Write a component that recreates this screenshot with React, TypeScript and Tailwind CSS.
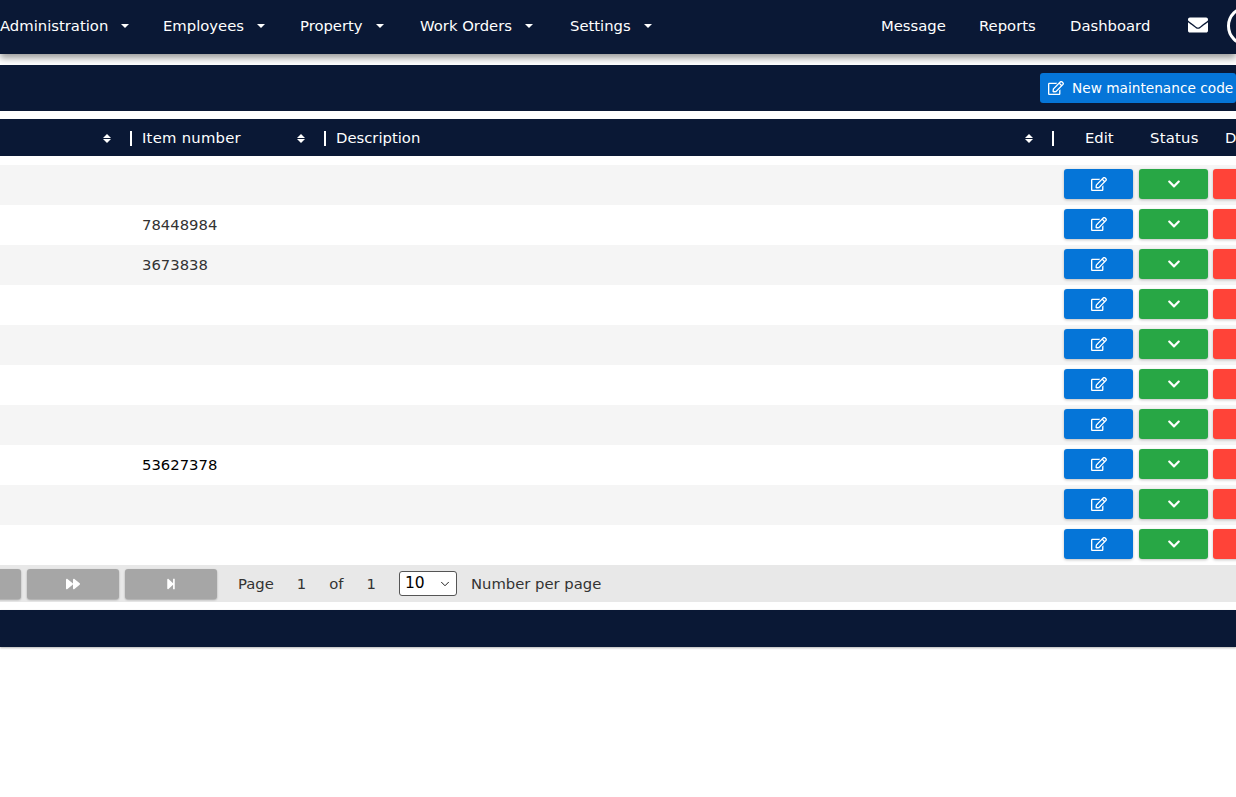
import React from 'react';
import { ChevronDown } from 'lucide-react';
import { FaChevronDown, FaEnvelope, FaForward, FaRegEdit, FaStepForward } from 'react-icons/fa';

const navy = 'bg-[#0a1835]';

const leftNav = [
  { label: 'Administration', w: 'w-[163px]' },
  { label: 'Employees', w: 'w-[137px]' },
  { label: 'Property', w: 'w-[120px]' },
  { label: 'Work Orders', w: 'w-[150px]' },
  { label: 'Settings', w: 'w-[311px]' },
];

const rows = ['', '78448984', '3673838', '', '', '', '', '53627378', '', ''];

const Caret = () => <span className="ml-[13px] h-0 w-0 shrink-0 border-x-[4.5px] border-t-[4px] border-x-transparent border-t-white" />;

const Sort = () => (
  <span className="flex w-[9px] shrink-0 flex-col gap-[1px]">
    <span className="h-0 w-0 border-x-[4.5px] border-b-[4px] border-x-transparent border-b-white" />
    <span className="h-0 w-0 border-x-[4.5px] border-t-[4px] border-x-transparent border-t-white" />
  </span>
);

const Divider = () => <span className="h-[15px] w-[2px] shrink-0 bg-white" />;

const App = () => {
  return (
    <div className="h-[797px] w-[1236px] overflow-hidden bg-white font-['DejaVu_Sans',sans-serif] text-[14.8px] text-[#333333]">
      <nav className={`${navy} relative z-10 flex h-[54px] items-center pb-[2px] text-white shadow-[0_4px_7px_rgba(0,0,0,0.4)]`}>
        <div className="flex w-[881px] shrink-0">
          {leftNav.map((n) => (
            <span key={n.label} className={`flex shrink-0 items-center whitespace-nowrap ${n.w}`}>
              {n.label}
              <Caret />
            </span>
          ))}
        </div>
        <span className="w-[98px] shrink-0">Message</span>
        <span className="w-[91px] shrink-0">Reports</span>
        <span className="w-[118px] shrink-0">Dashboard</span>
        <FaEnvelope size={20} className="-mt-[2px] shrink-0 text-white" />
        <span className="ml-[19px] h-[40px] w-[40px] shrink-0 rounded-full border-[3px] border-white" />
      </nav>

      <div className={`${navy} mt-[11px] flex h-[46px] items-center justify-end`}>
        <button className="flex h-[30px] w-[196px] shrink-0 items-center gap-[8px] rounded-[3px] bg-[#0575d8] pl-[8px] text-[13.7px] whitespace-nowrap text-white">
          <FaRegEdit size={16} className="shrink-0" />
          New maintenance code
        </button>
      </div>

      <div className={`${navy} mt-[8px] flex h-[37px] items-center pt-[2px] text-white`}>
        <div className="flex w-[130px] shrink-0 items-center justify-end pr-[18px]">
          <Sort />
        </div>
        <Divider />
        <span className="ml-[10px] w-[155px] shrink-0 tracking-[0.25px]">Item number</span>
        <Sort />
        <span className="ml-[18px] flex shrink-0"><Divider /></span>
        <span className="ml-[10px] w-[689px] shrink-0">Description</span>
        <Sort />
        <span className="ml-[18px] flex shrink-0"><Divider /></span>
        <span className="ml-[31px] w-[65px] shrink-0">Edit</span>
        <span className="w-[75px] shrink-0 tracking-[0.25px]">Status</span>
        <span className="shrink-0">Delete</span>
      </div>

      <div className="mt-[9px]">
        {rows.map((item, i) => (
          <div key={i} className={`flex h-[40px] items-center ${i % 2 === 0 ? 'bg-[#f5f5f5]' : 'bg-white'}`}>
            <span className={`ml-[142px] w-[922px] shrink-0 ${item === '53627378' ? 'text-black' : ''}`}>{item}</span>
            <div className="mb-[2px] flex shrink-0 gap-[6px]">
              <button className="flex h-[30px] w-[69px] items-center justify-center rounded-[3px] bg-[#0575d8] text-white shadow-[0_1px_3px_rgba(0,0,0,0.25)]">
                <FaRegEdit size={16} />
              </button>
              <button className="flex h-[30px] w-[69px] items-center justify-center rounded-[3px] bg-[#28a745] text-white shadow-[0_1px_3px_rgba(0,0,0,0.25)]">
                <FaChevronDown size={14} />
              </button>
              <button className="-ml-[1px] h-[30px] w-[69px] rounded-[3px] bg-[#ff4338] shadow-[0_1px_3px_rgba(0,0,0,0.25)]" />
            </div>
          </div>
        ))}
      </div>

      <div className="flex h-[37px] items-center bg-[#e8e8e8]">
        <button className="-ml-[71px] h-[30px] w-[92px] shrink-0 rounded-[3px] bg-[#a6a6a6] shadow-[0_1px_2px_rgba(0,0,0,0.3)]" />
        <button className="ml-[6px] flex h-[30px] w-[92px] shrink-0 items-center justify-center rounded-[3px] bg-[#a6a6a6] text-white shadow-[0_1px_2px_rgba(0,0,0,0.3)]">
          <FaForward size={14} />
        </button>
        <button className="ml-[6px] flex h-[30px] w-[92px] shrink-0 items-center justify-center rounded-[3px] bg-[#a6a6a6] text-white shadow-[0_1px_2px_rgba(0,0,0,0.3)]">
          <FaStepForward size={12} />
        </button>
        <span className="ml-[21px] pt-[2px]">Page</span>
        <span className="ml-[23px] pt-[2px]">1</span>
        <span className="ml-[23px] pt-[2px]">of</span>
        <span className="ml-[23px] pt-[2px]">1</span>
        <span className="ml-[23px] flex h-[25px] w-[58px] items-center justify-between rounded-[3px] border border-[#555555] bg-white pr-[4px] pl-[5px] text-[15.5px] text-black">
          10
          <ChevronDown size={14} strokeWidth={1.5} />
        </span>
        <span className="ml-[14px] pt-[2px]">Number per page</span>
      </div>

      <div className={`${navy} mt-[8px] h-[37px] shadow-[0_1px_2px_rgba(0,0,0,0.3)]`} />
    </div>
  );
};

export default App;
